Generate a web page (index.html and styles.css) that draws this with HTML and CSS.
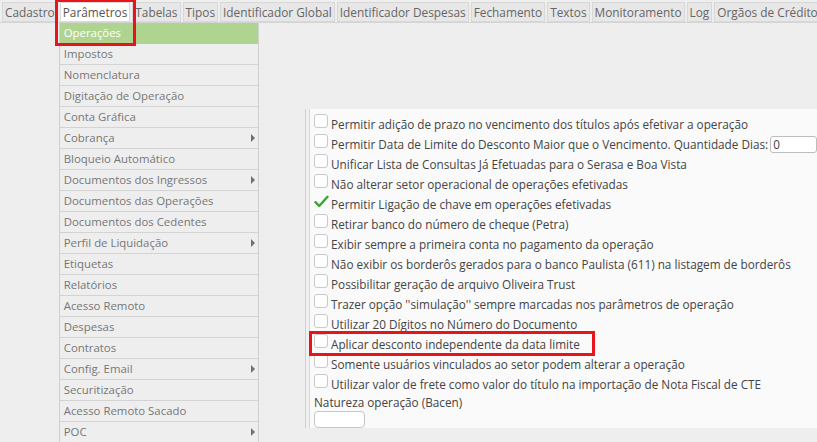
FILE: index.html
```html
<!DOCTYPE html>
<html lang="pt-BR">
<head>
<meta charset="utf-8">
<title>Parâmetros</title>
<link rel="stylesheet" href="styles.css">
</head>
<body>
<nav class="topbar">
  <div class="tab">Cadastro</div>
  <div class="tab tab-active">Parâmetros
    <ul class="dropdown">
      <li class="dd-item dd-selected">Operações</li>
      <li class="dd-item">Impostos</li>
      <li class="dd-item">Nomenclatura</li>
      <li class="dd-item">Digitação de Operação</li>
      <li class="dd-item">Conta Gráfica</li>
      <li class="dd-item has-sub">Cobrança</li>
      <li class="dd-item">Bloqueio Automático</li>
      <li class="dd-item has-sub">Documentos dos Ingressos</li>
      <li class="dd-item">Documentos das Operações</li>
      <li class="dd-item">Documentos dos Cedentes</li>
      <li class="dd-item has-sub">Perfil de Liquidação</li>
      <li class="dd-item">Etiquetas</li>
      <li class="dd-item">Relatórios</li>
      <li class="dd-item">Acesso Remoto</li>
      <li class="dd-item">Despesas</li>
      <li class="dd-item">Contratos</li>
      <li class="dd-item has-sub">Config. Email</li>
      <li class="dd-item">Securitização</li>
      <li class="dd-item">Acesso Remoto Sacado</li>
      <li class="dd-item has-sub">POC</li>
    </ul>
    <div class="mark mark-menu"></div>
  </div>
  <div class="tab">Tabelas</div>
  <div class="tab">Tipos</div>
  <div class="tab">Identificador Global</div>
  <div class="tab">Identificador Despesas</div>
  <div class="tab">Fechamento</div>
  <div class="tab">Textos</div>
  <div class="tab">Monitoramento</div>
  <div class="tab">Log</div>
  <div class="tab">Orgãos de Crédito</div>
</nav>

<main class="main">
  <section class="panel">
    <div class="row"><span class="cb"></span><span class="lbl">Permitir adição de prazo no vencimento dos títulos após efetivar a operação</span></div>
    <div class="row"><span class="cb"></span><span class="lbl">Permitir Data de Limite do Desconto Maior que o Vencimento. Quantidade Dias:</span><span class="num-input">0</span></div>
    <div class="row"><span class="cb"></span><span class="lbl">Unificar Lista de Consultas Já Efetuadas para o Serasa e Boa Vista</span></div>
    <div class="row"><span class="cb"></span><span class="lbl">Não alterar setor operacional de operações efetivadas</span></div>
    <div class="row"><span class="cb cb-checked"><svg width="15" height="13" viewBox="0 0 15 13"><path d="M1.5 7.2 L5.2 11 L13.5 1.8" fill="none" stroke="#3aa52f" stroke-width="2.4" stroke-linecap="round" stroke-linejoin="round"/></svg></span><span class="lbl">Permitir Ligação de chave em operações efetivadas</span></div>
    <div class="row"><span class="cb"></span><span class="lbl">Retirar banco do número de cheque (Petra)</span></div>
    <div class="row"><span class="cb"></span><span class="lbl">Exibir sempre a primeira conta no pagamento da operação</span></div>
    <div class="row"><span class="cb"></span><span class="lbl">Não exibir os borderôs gerados para o banco Paulista (611) na listagem de borderôs</span></div>
    <div class="row"><span class="cb"></span><span class="lbl">Possibilitar geração de arquivo Oliveira Trust</span></div>
    <div class="row"><span class="cb"></span><span class="lbl">Trazer opção ''simulação'' sempre marcadas nos parâmetros de operação</span></div>
    <div class="row"><span class="cb"></span><span class="lbl">Utilizar 20 Dígitos no Número do Documento</span></div>
    <div class="row row-marked"><span class="cb"></span><span class="lbl">Aplicar desconto independente da data limite</span><div class="mark mark-row"></div></div>
    <div class="row"><span class="cb"></span><span class="lbl">Somente usuários vinculados ao setor podem alterar a operação</span></div>
    <div class="row"><span class="cb"></span><span class="lbl">Utilizar valor de frete como valor do título na importação de Nota Fiscal de CTE</span></div>
    <div class="field-label">Natureza operação (Bacen)</div>
    <div class="text-input"></div>
  </section>
</main>
</body>
</html>
```

FILE: styles.css
```css
* { box-sizing: border-box; }
html, body { margin: 0; padding: 0; }
body {
  width: 817px;
  height: 442px;
  overflow: hidden;
  background: #eeeeee;
  font-family: "Open Sans", "DejaVu Sans", sans-serif;
  font-size: 11.75px;
  color: #444;
}
.topbar {
  display: flex;
  padding: 2px 0 0 2px;
  height: 23px;
  border-bottom: 1px solid #d4d4d4;
  background: #eeeeee;
  white-space: nowrap;
  font-size: 11.85px;
}
.tab {
  position: relative;
  height: 20px;
  line-height: 19px;
  padding: 0 2px;
  margin-right: 2px;
  background: #e7e7e7;
  border: 1px solid #d8d8d8;
  color: #666;
}
.tab-active { background: #fff; color: #555; }
.dropdown {
  position: absolute;
  left: -2px;
  top: 20px;
  width: 200px;
  margin: 0;
  padding: 0;
  list-style: none;
  background: #eeeeee;
  border-left: 1px solid #d0d0d0;
  border-right: 1px solid #d0d0d0;
  z-index: 5;
  font-size: 11.4px;
}
.dd-item {
  position: relative;
  height: 21px;
  line-height: 20px;
  padding-left: 4px;
  border-bottom: 1px solid #d3d3d3;
  color: #777;
}
.dd-selected { background: #afd48f; color: #fff; border-bottom-color: #afd48f; }
.has-sub::after {
  content: "";
  position: absolute;
  right: 3px;
  top: 6px;
  border-left: 4px solid #707070;
  border-top: 4px solid transparent;
  border-bottom: 4px solid transparent;
}
.mark {
  position: absolute;
  border: 3px solid #e8131b;
  pointer-events: none;
  z-index: 6;
}
.mark-menu { left: -6px; top: -4px; width: 81px; height: 47px; }
.main { padding: 86px 0 0 305px; }
.panel {
  height: 319px;
  background: #fafafa;
  border-left: 1px solid #cfcfcf;
  box-shadow: inset 3px 0 0 #f0f0f0, inset 4px 0 0 #d6d6d6;
  padding: 5px 0 0 8px;
}
.row {
  position: relative;
  display: flex;
  align-items: flex-start;
  height: 20px;
  white-space: nowrap;
}
.cb {
  flex: none;
  width: 14px;
  height: 14px;
  margin-top: 0;
  margin-right: 3px;
  background: #fff;
  border: 1px solid #c9c9c9;
  border-radius: 3px;
}
.cb-checked { border: none; background: transparent; }
.cb-checked svg { display: block; margin-top: 1px; }
.lbl { line-height: 20px; margin-top: 0; }
.num-input {
  margin-left: 2px;
  margin-top: 2px;
  width: 60px;
  height: 17px;
  line-height: 15px;
  padding-left: 2px;
  background: #fff;
  border: 1px solid #bdbdbd;
  border-radius: 3px;
}
.mark-row { left: -5px; top: -3px; width: 286px; height: 25px; }
.field-label { line-height: 16px; margin-top: 0; }
.text-input {
  width: 51px;
  height: 17px;
  margin-top: 1px;
  background: #fff;
  border: 1px solid #c6c6c6;
  border-radius: 4px;
}
```
